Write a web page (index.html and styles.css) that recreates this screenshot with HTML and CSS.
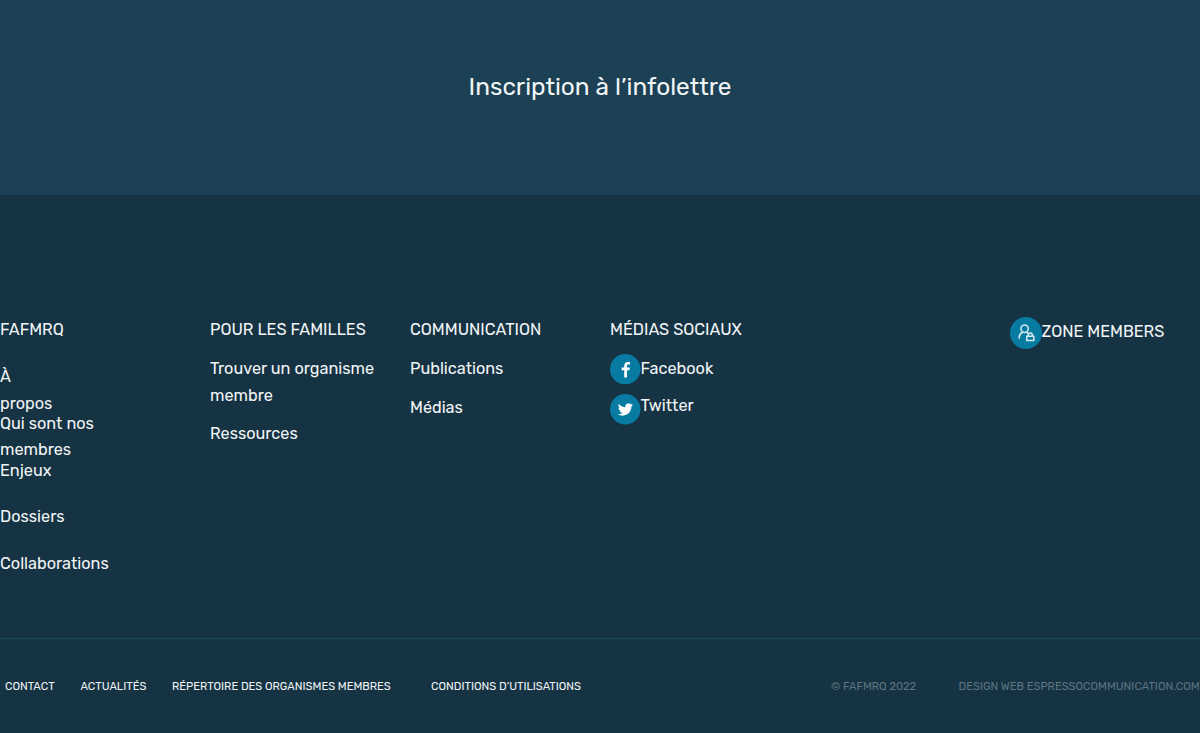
FILE: index.html
```html
<!DOCTYPE html>
<html lang="fr">
<head>
<meta charset="utf-8">
<title>FAFMRQ</title>
<link rel="stylesheet" href="styles.css">
</head>
<body>
<section class="newsletter"><h2 class="newsletter-title">Inscription à l’infolettre</h2></section>
<footer class="footer">
  <div class="columns">
    <nav>
      <h3 class="heading">FAFMRQ</h3>
      <ul class="about-list">
        <li><a>À<br>propos</a></li>
        <li><a>Qui sont nos membres</a></li>
        <li><a>Enjeux</a></li>
        <li><a>Dossiers</a></li>
        <li><a>Collaborations</a></li>
      </ul>
    </nav>
    <nav>
      <h3 class="heading">POUR LES FAMILLES</h3>
      <ul class="list">
        <li><a>Trouver un organisme membre</a></li>
        <li><a>Ressources</a></li>
      </ul>
    </nav>
    <nav>
      <h3 class="heading">COMMUNICATION</h3>
      <ul class="list">
        <li><a>Publications</a></li>
        <li><a>Médias</a></li>
      </ul>
    </nav>
    <nav>
      <h3 class="heading">MÉDIAS SOCIAUX</h3>
      <a class="social social-facebook">
        <svg class="icon" viewBox="0 0 30 30"><circle cx="15" cy="15" r="15"/><path class="fill" d="M14 23v-7h-2.500v-2.800H14v-1.800c0-2.500 1.400-3.600 3.500-3.600l2.100.1v2.500h-1.400c-1.200 0-1.500.6-1.500 1.400v1.400h2.800l-.4 2.800h-2.400v7z"/></svg>
        <span>Facebook</span>
      </a>
      <a class="social social-twitter">
        <svg class="icon" viewBox="0 0 30 30"><circle cx="15" cy="15" r="15"/><path class="fill" transform="translate(7.700 7.800) scale(.62)" d="M23.950 4.570a10 10 0 0 1-2.820.77 4.960 4.960 0 0 0 2.160-2.720c-.95.550-2 .95-3.130 1.180a4.920 4.920 0 0 0-8.380 4.480C7.690 8.090 4.070 6.130 1.640 3.160a4.820 4.820 0 0 0-.67 2.480c0 1.710.87 3.210 2.190 4.100a4.900 4.900 0 0 1-2.230-.62v.06a4.920 4.920 0 0 0 3.950 4.830 5 5 0 0 1-2.210.08 4.940 4.940 0 0 0 4.600 3.420A9.870 9.870 0 0 1 0 19.540a13.990 13.990 0 0 0 7.550 2.210c9.050 0 14-7.500 14-13.980l-.02-.64a9.940 9.940 0 0 0 2.420-2.560z"/></svg>
        <span>Twitter</span>
      </a>
    </nav>
    <a class="members">
      <svg class="icon-members" viewBox="0 0 32 32"><circle cx="16" cy="16" r="16"/><g class="stroke"><circle cx="14.600" cy="11.700" r="3.700"/><path d="M9.200 21.300v-1c0-2.100 1.200-3.900 3.100-4.800M16.700 15.100l1.500 1.500M16.800 19.300h7v4.100h-7zM18.300 19.100v-1.200a2 2 0 0 1 4 0v1.200"/></g></svg>
      <span>ZONE MEMBERS</span>
    </a>
  </div>
  <div class="legal">
    <a>CONTACT</a>
    <a>ACTUALITÉS</a>
    <a>RÉPERTOIRE DES ORGANISMES MEMBRES</a>
    <a>CONDITIONS D’UTILISATIONS</a>
    <span class="muted">© FAFMRQ 2022</span>
    <span class="muted">DESIGN WEB ESPRESSOCOMMUNICATION.COM</span>
  </div>
</footer>
</body>
</html>
```
FILE: styles.css
```css
* { box-sizing: border-box; }
body { margin: 0; height: 733px; overflow: hidden; background: #163344; color: #f1f5f6; font: 16.250px/26.500px Rubik, Roboto, sans-serif; }
h2, h3, ul { margin: 0; padding: 0; font-weight: 400; list-style: none; }
.newsletter { height: 195px; padding-top: 71px; background: #1c4154; text-align: center; }
.newsletter-title { font-size: 24.400px; line-height: 32px; }
.footer { height: 538px; display: flex; flex-direction: column; }
.columns { height: 443px; padding-top: 122px; display: grid; grid-template-columns: 210px 200px 200px 400px 190px; align-items: start; }
.heading { font-size: 16.250px; line-height: 26px; }
.about-list { width: 110px; padding-top: 21px; }
.about-list li { height: 46.800px; }
.list { width: 180px; padding-top: 13px; display: flex; flex-direction: column; gap: 12px; }
.social { display: flex; align-items: flex-start; }
.social-facebook { margin-top: 10.500px; height: 40.500px; }
.social-facebook span { padding-top: 2.500px; }
.social-twitter span { margin-top: -1px; }
.icon { width: 30.500px; height: 30.500px; fill: #077ba1; }
.icon-members { width: 32px; height: 32px; fill: #077ba1; }
.fill { fill: #fff; }
.stroke { fill: none; stroke: #d9edf2; stroke-width: 1.500; stroke-linecap: round; }
.members { display: flex; align-items: center; }
.members span { margin: -1px 0 0 -.5px; }
.legal { height: 95px; border-top: 1px solid #184b60; display: grid; grid-template-columns: 75.500px 91.500px 259px 400px 127.500px 1fr; align-items: center; padding: 2px 0 0 5px; font-size: 11.170px; line-height: 18px; white-space: nowrap; }
.muted { color: #5c757f; }
```
